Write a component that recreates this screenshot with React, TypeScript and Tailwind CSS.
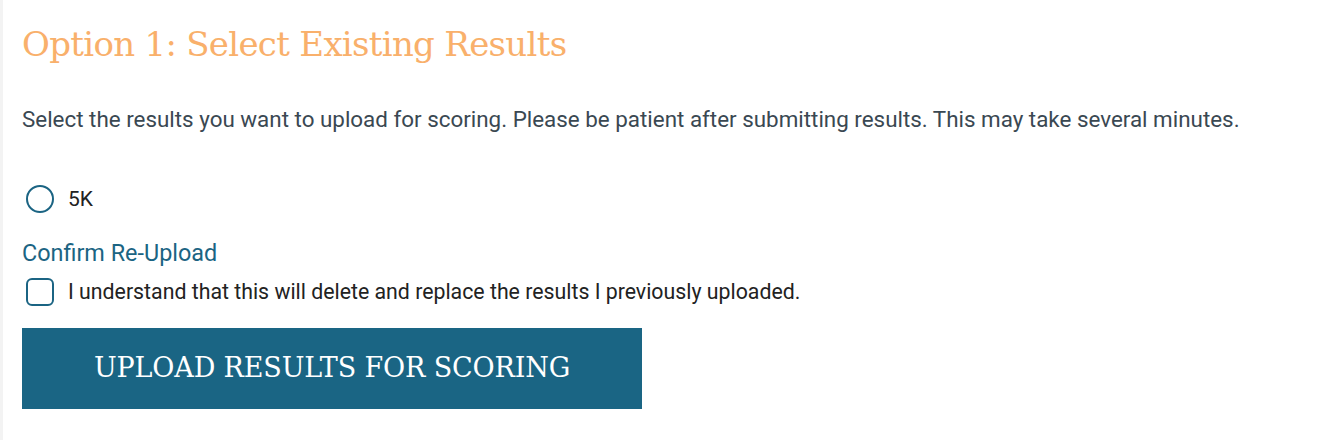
import React, { useState } from 'react';

const App: React.FC = () => {
  const [selected, setSelected] = useState(false);
  const [confirmed, setConfirmed] = useState(false);

  return (
    <div className="min-h-[440px] w-[1320px] bg-white border-l-[3px] border-[#f3f3f3] pl-[19px] pt-[24px] font-['Roboto',sans-serif]">
      <h2 className="text-[34px] leading-[40px] text-[#f9b06b] font-['DejaVu_Serif',serif] tracking-[-0.7px]">
        Option 1: Select Existing Results
      </h2>
      <p className="mt-[42px] text-[22.4px] leading-[26px] text-[#3a4852]">
        Select the results you want to upload for scoring. Please be patient after submitting results. This may take several minutes.
      </p>

      <label className="mt-[53px] flex items-center gap-[14px] cursor-pointer" onClick={() => setSelected(!selected)}>
        <span className="ml-[4px] flex h-[28px] w-[28px] items-center justify-center rounded-full border-2 border-[#1b6483]">
          {selected && <span className="h-[14px] w-[14px] rounded-full bg-[#1b6483]" />}
        </span>
        <span className="text-[21px] leading-[28px] text-[#222]">5K</span>
      </label>

      <div className="mt-[27px] text-[23.4px] leading-[26px] text-[#1b6483]">Confirm Re-Upload</div>

      <label className="mt-[12px] flex items-center gap-[14px] cursor-pointer" onClick={() => setConfirmed(!confirmed)}>
        <span className="ml-[4px] flex h-[28px] w-[28px] items-center justify-center rounded-[6px] border-2 border-[#1b6483]">
          {confirmed && (
            <svg viewBox="0 0 24 24" className="h-[18px] w-[18px]" fill="none" stroke="#1b6483" strokeWidth={3}>
              <path d="M5 12l5 5 9-10" />
            </svg>
          )}
        </span>
        <span className="text-[21.3px] leading-[28px] text-[#222]">
          I understand that this will delete and replace the results I previously uploaded.
        </span>
      </label>

      <button className="mt-[22px] flex h-[81px] w-[620px] items-center justify-center bg-[#1a6584] text-[27px] text-white font-['DejaVu_Serif',serif] tracking-[-0.15px]">
        UPLOAD RESULTS FOR SCORING
      </button>
    </div>
  );
};

export default App;
